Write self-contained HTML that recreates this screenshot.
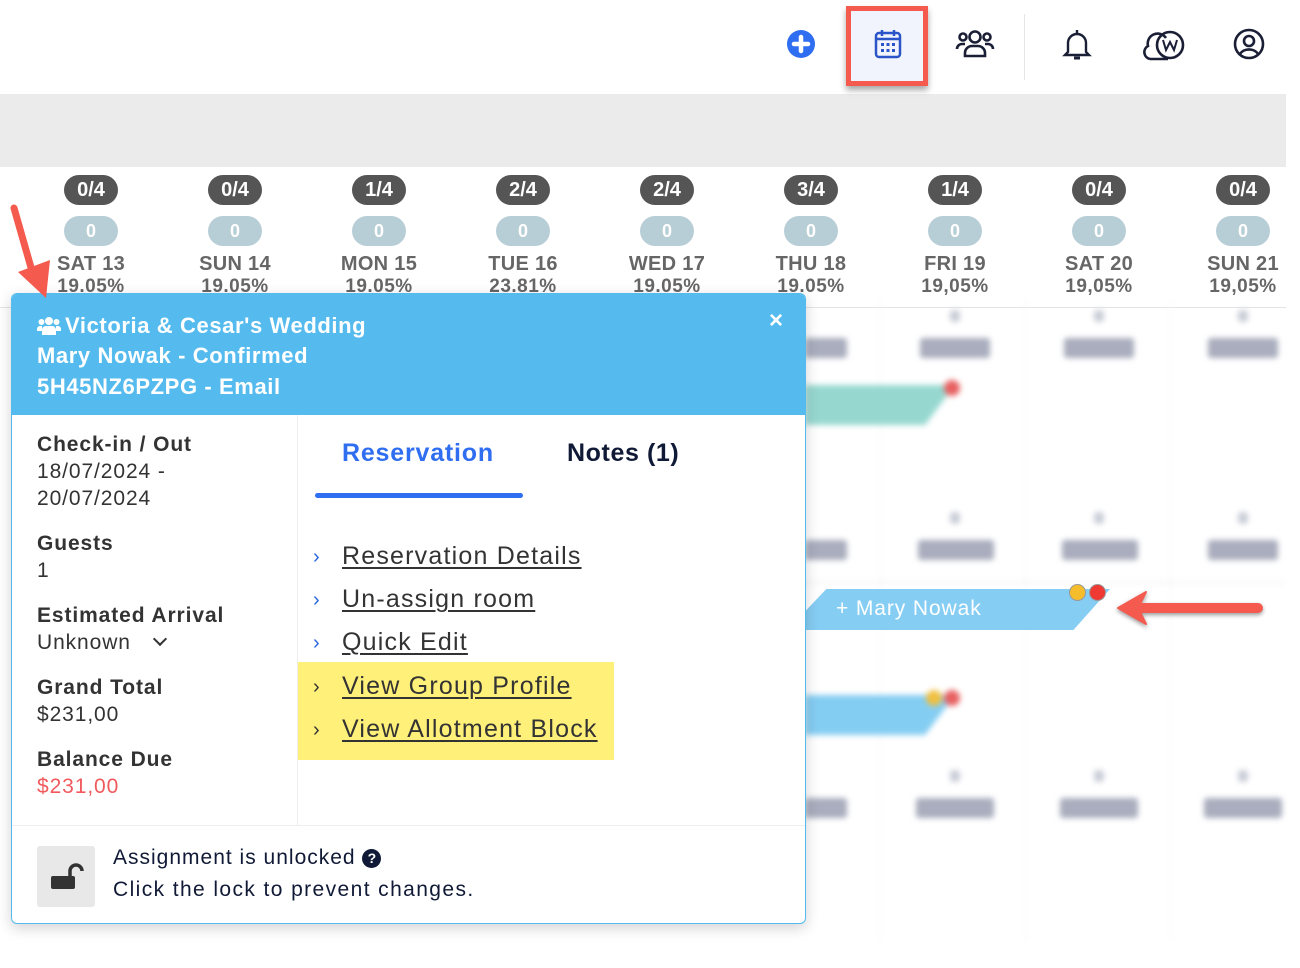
<!DOCTYPE html>
<html><head><meta charset="utf-8">
<style>
*{margin:0;padding:0;box-sizing:border-box}
body{width:1300px;height:968px;position:relative;overflow:hidden;background:#fff;font-family:"Liberation Sans",sans-serif;color:#333}
.a{position:absolute}
.col{position:absolute;width:144px;text-align:center}
.p1{margin:0 auto;width:54px;height:30px;border-radius:15px;background:#555;color:#fff;font-weight:bold;font-size:20px;line-height:30px}
.p2{margin:11px auto 0;width:54px;height:30px;border-radius:15px;background:#b8ced6;color:#fff;font-weight:bold;font-size:18px;line-height:30px}
.d{font-weight:bold;font-size:20px;color:#666;line-height:24px;margin-top:6px;letter-spacing:0.3px}
.pc{font-weight:bold;font-size:19px;color:#666;line-height:22px;letter-spacing:0.5px}
.blur{filter:blur(3px)}
.price{position:absolute;width:70px;height:20px;background:#a9adbd;border-radius:3px}
.zero{position:absolute;width:10px;height:12px;background:#c8ccd6;border-radius:4px}
.lbl{font-weight:bold;font-size:21px;color:#333;line-height:26px;letter-spacing:0.9px}
.val{font-size:21px;color:#333;line-height:27px;letter-spacing:0.9px}
.lnk{position:absolute;left:342px;font-size:25px;color:#333;text-decoration:underline;text-decoration-thickness:2px;text-underline-offset:3px;letter-spacing:1.2px}
.chev{position:absolute;left:313px;font-size:20px;color:#2a66e0}
.hd{position:absolute;font-size:22px;font-weight:bold;color:#fff;letter-spacing:0.6px}
</style></head><body>

<div class="a" style="left:0;top:94px;width:1286px;height:73px;background:#ebebeb"></div>
<div class="a" style="left:1024px;top:14px;width:1px;height:66px;background:#e6e6e6"></div>
<svg class="a" style="left:786px;top:29px" width="30" height="30"><circle cx="15" cy="15" r="14" fill="#2f6ef0"/><path d="M15 8v14M8 15h14" stroke="#fff" stroke-width="4.5" stroke-linecap="round"/></svg>
<div class="a" style="left:846px;top:6px;width:82px;height:80px;border:5px solid #f55a4e;background:#f1f4fc;box-shadow:0 4px 6px rgba(0,0,0,.35)"></div>
<svg class="a" style="left:873px;top:28px" width="30" height="32"><rect x="3" y="5" width="24" height="24" rx="3" fill="none" stroke="#2a55c8" stroke-width="2.5"/><path d="M3 11h24M9 2v6M21 2v6" stroke="#2a55c8" stroke-width="2.5"/><g fill="#2a55c8"><rect x="8" y="15" width="3" height="3"/><rect x="13.5" y="15" width="3" height="3"/><rect x="19" y="15" width="3" height="3"/><rect x="8" y="21" width="3" height="3"/><rect x="13.5" y="21" width="3" height="3"/><rect x="19" y="21" width="3" height="3"/></g></svg>
<svg class="a" style="left:955px;top:28px" width="40" height="32" fill="none" stroke="#1a1f36" stroke-width="2.6"><circle cx="20" cy="9" r="5.5"/><circle cx="8" cy="9" r="3.5"/><circle cx="32" cy="9" r="3.5"/><path d="M10 28v-3a7 7 0 0 1 7-7h6a7 7 0 0 1 7 7v3zM2 21a5 5 0 0 1 5-5h3M38 21a5 5 0 0 0-5-5h-3"/></svg>
<svg class="a" style="left:1062px;top:28px" width="30" height="34" fill="none" stroke="#1a1f36" stroke-width="2.4"><path d="M6 24V15a9 9 0 0 1 18 0v9l3 3H3z"/><path d="M15 2v4"/><path d="M12 30h6" stroke-width="3"/></svg>
<svg class="a" style="left:1140px;top:28px" width="46" height="34" fill="none" stroke="#1a1f36" stroke-width="2.6"><path d="M10 31a7 7 0 0 1-2-13 10 10 0 0 1 18-8"/><circle cx="30" cy="17" r="13"/><path d="M23 12l3 10 4-8 4 8 3-10" stroke-width="2"/><path d="M10 31h18"/></svg>
<svg class="a" style="left:1233px;top:28px" width="32" height="32" fill="none" stroke="#1a1f36" stroke-width="2.6"><circle cx="16" cy="16" r="14"/><circle cx="16" cy="13" r="5"/><path d="M7 26a10 8 0 0 1 18 0"/></svg>

<div class="col" style="left:19px;top:175px"><div class="p1">0/4</div><div class="p2">0</div><div class="d">SAT 13</div><div class="pc">19.05%</div></div>
<div class="col" style="left:163px;top:175px"><div class="p1">0/4</div><div class="p2">0</div><div class="d">SUN 14</div><div class="pc">19.05%</div></div>
<div class="col" style="left:307px;top:175px"><div class="p1">1/4</div><div class="p2">0</div><div class="d">MON 15</div><div class="pc">19.05%</div></div>
<div class="col" style="left:451px;top:175px"><div class="p1">2/4</div><div class="p2">0</div><div class="d">TUE 16</div><div class="pc">23.81%</div></div>
<div class="col" style="left:595px;top:175px"><div class="p1">2/4</div><div class="p2">0</div><div class="d">WED 17</div><div class="pc">19.05%</div></div>
<div class="col" style="left:739px;top:175px"><div class="p1">3/4</div><div class="p2">0</div><div class="d">THU 18</div><div class="pc">19.05%</div></div>
<div class="col" style="left:883px;top:175px"><div class="p1">1/4</div><div class="p2">0</div><div class="d">FRI 19</div><div class="pc">19,05%</div></div>
<div class="col" style="left:1027px;top:175px"><div class="p1">0/4</div><div class="p2">0</div><div class="d">SAT 20</div><div class="pc">19,05%</div></div>
<div class="col" style="left:1171px;top:175px"><div class="p1">0/4</div><div class="p2">0</div><div class="d">SUN 21</div><div class="pc">19,05%</div></div>
<div class="a" style="left:0;top:307px;width:1286px;height:1px;background:#e4e4e4"></div>

<div class="a blur" style="left:0;top:300px;width:1300px;height:668px">
 <div class="a" style="left:880px;top:0;width:1px;height:640px;background:#f4f4f4"></div>
 <div class="a" style="left:1025px;top:0;width:1px;height:640px;background:#f4f4f4"></div>
 <div class="a" style="left:1170px;top:0;width:1px;height:640px;background:#f4f4f4"></div>
 <div class="a" style="left:800px;top:282px;width:486px;height:1px;background:#e4e4e4"></div>
 <div class="zero" style="left:950px;top:10px"></div><div class="zero" style="left:1094px;top:10px"></div><div class="zero" style="left:1238px;top:10px"></div>
 <div class="price" style="left:805px;top:38px;width:42px"></div><div class="price" style="left:920px;top:38px"></div><div class="price" style="left:1064px;top:38px"></div><div class="price" style="left:1208px;top:38px"></div>
 <div class="a" style="left:805px;top:85px;width:150px;height:40px;background:#96d8d0;clip-path:polygon(0 0,100% 0,80% 100%,0 100%)"></div>
 <div class="a" style="left:944px;top:80px;width:16px;height:16px;border-radius:50%;background:#e86060"></div>
 <div class="zero" style="left:950px;top:212px"></div><div class="zero" style="left:1094px;top:212px"></div><div class="zero" style="left:1238px;top:212px"></div>
 <div class="price" style="left:805px;top:240px;width:42px"></div><div class="price" style="left:918px;top:240px;width:76px"></div><div class="price" style="left:1062px;top:240px;width:76px"></div><div class="price" style="left:1208px;top:240px"></div>
 <div class="a" style="left:805px;top:395px;width:150px;height:40px;background:#84cdf2;clip-path:polygon(0 0,100% 0,80% 100%,0 100%)"></div>
 <div class="a" style="left:926px;top:390px;width:16px;height:16px;border-radius:50%;background:#f0c040"></div>
 <div class="a" style="left:944px;top:390px;width:16px;height:16px;border-radius:50%;background:#e86060"></div>
 <div class="zero" style="left:950px;top:470px"></div><div class="zero" style="left:1094px;top:470px"></div><div class="zero" style="left:1238px;top:470px"></div>
 <div class="price" style="left:805px;top:498px;width:42px"></div><div class="price" style="left:916px;top:498px;width:78px"></div><div class="price" style="left:1060px;top:498px;width:78px"></div><div class="price" style="left:1204px;top:498px;width:78px"></div>
</div>

<div class="a" style="left:805px;top:589px;width:305px;height:41px;background:#86cdf4;clip-path:polygon(7% 0,100% 0,88% 100%,0 100%,0 55%);box-shadow:0 2px 4px rgba(0,0,0,.2)"></div>
<div class="a" style="left:836px;top:597px;font-size:21px;color:#fff;letter-spacing:0.9px">+ Mary Nowak</div>
<div class="a" style="left:1069px;top:584px;width:17px;height:17px;border-radius:50%;background:#f5bd2b;border:1px solid #999"></div>
<div class="a" style="left:1089px;top:584px;width:17px;height:17px;border-radius:50%;background:#ee3a32;border:1px solid #999"></div>
<svg class="a" style="left:1110px;top:584px" width="160" height="50"><path d="M8 24L36 8L30 20H148a4 4 0 0 1 0 8H30L36 40z" fill="#f55a4e" stroke="#f55a4e" stroke-width="2" stroke-linejoin="round" style="filter:drop-shadow(0 2px 2px rgba(0,0,0,.4))"/></svg>

<div class="a" style="left:11px;top:293px;width:795px;height:631px;border:1px solid #55bbee;border-radius:6px;background:#fff;box-shadow:0 4px 14px rgba(0,0,0,.18);overflow:hidden">
 <div class="a" style="left:0;top:0;width:795px;height:121px;background:#55bbee"></div>
 <div class="a" style="left:285px;top:121px;width:1px;height:411px;background:#eee"></div>
 <div class="a" style="left:0;top:531px;width:795px;height:1px;background:#eee"></div>
</div>
<svg class="a" style="left:37px;top:316px" width="24" height="20" fill="#fff"><circle cx="12" cy="5" r="4"/><circle cx="4.5" cy="6" r="3"/><circle cx="19.5" cy="6" r="3"/><path d="M5 19v-5a4 4 0 0 1 4-4h6a4 4 0 0 1 4 4v5zM0 15v-2a3 3 0 0 1 3-3h2v5zM24 15v-2a3 3 0 0 0-3-3h-2v5z"/></svg>
<div class="hd" style="left:65px;top:313px">Victoria &amp; Cesar's Wedding</div>
<div class="hd" style="left:37px;top:343px">Mary Nowak - Confirmed</div>
<div class="hd" style="left:37px;top:374px">5H45NZ6PZPG - Email</div>
<div class="a" style="left:769px;top:307px;font-size:24px;font-weight:bold;color:#fff">×</div>

<div class="a" style="left:37px;top:432px">
 <div class="lbl">Check-in / Out</div><div class="val">18/07/2024 -<br>20/07/2024</div>
 <div class="lbl" style="margin-top:19px">Guests</div><div class="val">1</div>
 <div class="lbl" style="margin-top:19px">Estimated Arrival</div><div class="val">Unknown &nbsp;&nbsp;<span style="display:inline-block;width:10px;height:10px;border-right:2px solid #333;border-bottom:2px solid #333;transform:rotate(45deg);position:relative;top:-5px;left:4px"></span></div>
 <div class="lbl" style="margin-top:19px">Grand Total</div><div class="val">$231,00</div>
 <div class="lbl" style="margin-top:19px">Balance Due</div><div class="val" style="color:#f05a5e">$231,00</div>
</div>

<div class="a" style="left:342px;top:439px;font-size:25px;font-weight:bold;color:#2f6ef0;letter-spacing:0.8px">Reservation</div>
<div class="a" style="left:567px;top:439px;font-size:25px;font-weight:bold;color:#101a36;letter-spacing:0.6px">Notes (1)</div>
<div class="a" style="left:315px;top:493px;width:208px;height:5px;border-radius:3px;background:#2f6ef0"></div>

<div class="a" style="left:298px;top:662px;width:316px;height:98px;background:#fff07a"></div>
<div class="chev" style="top:546px">›</div><a class="lnk" style="top:542px">Reservation Details</a>
<div class="chev" style="top:589px">›</div><a class="lnk" style="top:585px">Un-assign room</a>
<div class="chev" style="top:632px">›</div><a class="lnk" style="top:628px">Quick Edit</a>
<div class="chev" style="top:676px;color:#333">›</div><a class="lnk" style="top:672px">View Group Profile</a>
<div class="chev" style="top:719px;color:#333">›</div><a class="lnk" style="top:715px">View Allotment Block</a>

<div class="a" style="left:37px;top:846px;width:58px;height:61px;background:#e8e8e8;border-radius:3px"></div>
<svg class="a" style="left:50px;top:862px" width="34" height="28"><path d="M24 16V9a6 6 0 0 1 12 0" fill="none" stroke="#333" stroke-width="3.5" transform="translate(-4 0)"/><rect x="1" y="14" width="24" height="13" rx="2" fill="#333"/></svg>
<div class="a" style="left:113px;top:846px;font-size:21px;color:#101a36;letter-spacing:1px">Assignment is unlocked <span style="display:inline-block;width:19px;height:19px;border-radius:50%;background:#101a36;color:#fff;font-size:14px;font-weight:bold;text-align:center;line-height:19px;vertical-align:1px;letter-spacing:0">?</span></div>
<div class="a" style="left:113px;top:878px;font-size:21px;color:#101a36;letter-spacing:1.4px">Click the lock to prevent changes.</div>

<svg class="a" style="left:4px;top:200px" width="50" height="105"><path d="M10 8L30 78" stroke="#f55a4e" stroke-width="7" stroke-linecap="round"/><path d="M14 72L42 98L46 60z" fill="#f55a4e"/></svg>
</body></html>
